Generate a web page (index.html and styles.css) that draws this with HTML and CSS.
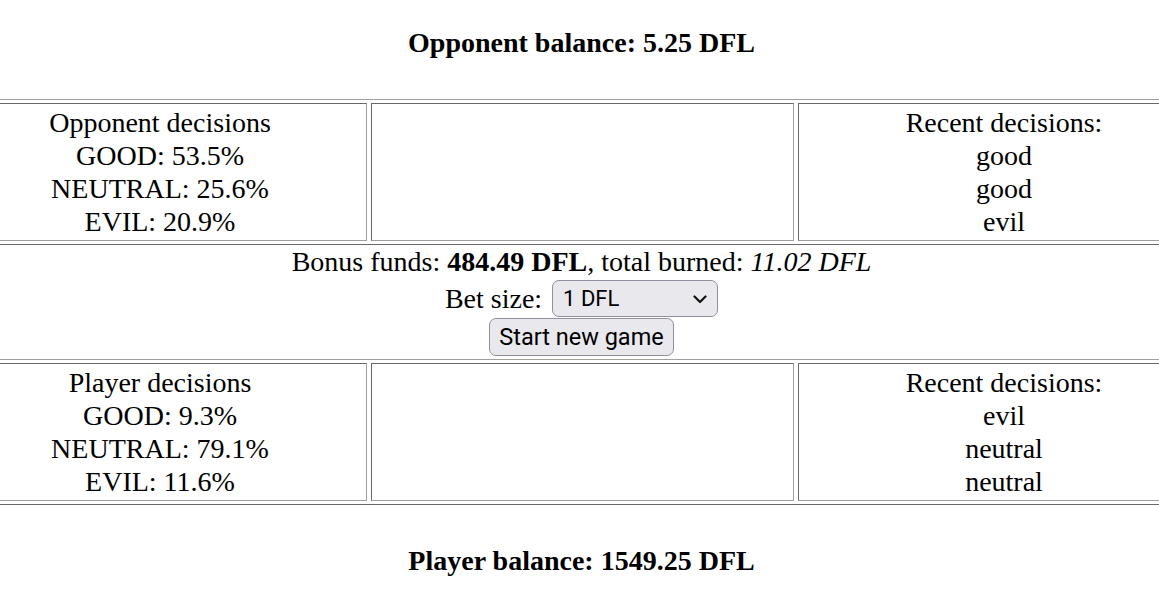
FILE: index.html
```
<!DOCTYPE html>
<html lang="en">
  <head>
    <meta charset="utf-8" />
    <meta name="viewport" content="width=device-width, initial-scale=1" />
    <title>Good, neutral, evil</title>
    <link rel="stylesheet" href="styles.css">
  </head>
  <body>
    <div class="page">
      <h4 class="balance">Opponent balance: 5.25 DFL</h4>
      <table class="side">
        <tr>
          <td class="stats">Opponent decisions<br>GOOD: 53.5%<br>NEUTRAL: 25.6%<br>EVIL: 20.9%</td>
          <td class="field"></td>
          <td class="recent">Recent decisions:<br>good<br>good<br>evil</td>
        </tr>
      </table>
      <div class="controls">
        <div class="funds">Bonus funds: <b>484.49 DFL</b>, total burned: <i>11.02 DFL</i></div>
        <div class="bet">
          <label for="bet">Bet size:</label>
          <span class="picker">
            <select id="bet">
              <option>1 DFL</option>
              <option>5 DFL</option>
              <option>10 DFL</option>
              <option>50 DFL</option>
            </select>
            <svg width="14" height="9" viewBox="0 0 14 9"><path d="M1.5 1.5 L7 7 L12.5 1.5" fill="none" stroke="#111" stroke-width="2.2" stroke-linecap="round" stroke-linejoin="round"/></svg>
          </span>
        </div>
        <div class="start"><button id="start">Start new game</button></div>
      </div>
      <table class="side">
        <tr>
          <td class="stats">Player decisions<br>GOOD: 9.3%<br>NEUTRAL: 79.1%<br>EVIL: 11.6%</td>
          <td class="field"></td>
          <td class="recent">Recent decisions:<br>evil<br>neutral<br>neutral</td>
        </tr>
      </table>
      <h4 class="balance balance-bottom">Player balance: 1549.25 DFL</h4>
    </div>
  </body>
</html>
```

FILE: styles.css
```
html, body {
  overflow: hidden;
}
body {
  margin: 0;
  background: #fff;
  color: #000;
  font-family: "Liberation Serif", "Times New Roman", serif;
  font-size: 28px;
  line-height: 33px;
}
.page {
  width: 1267px;
  margin-left: -52px;
  text-align: center;
}
.balance {
  margin: 26px 0 40px;
  font-size: 28px;
  font-weight: bold;
}
.balance-bottom {
  margin-top: 39px;
}

/* decisions tables */
.side {
  width: 1267px;
  table-layout: fixed;
  border-collapse: separate;
  border-spacing: 4px 3px;
  border: 1px solid;
  border-color: #a0a0a0 #696969 #696969 #a0a0a0;
}
.side td {
  box-sizing: border-box;
  padding: 2px;
  border: 1px solid;
  border-color: #696969 #a0a0a0 #a0a0a0 #696969;
  text-align: center;
  vertical-align: middle;
}
.side .stats {
  width: 414px;
}
.side .field {
  width: 423px;
}
.side .recent {
  width: 412px;
}

/* middle controls */
.funds {
  height: 33px;
}
.bet {
  display: flex;
  justify-content: center;
  align-items: center;
  gap: 10px;
  height: 37px;
  padding: 2px 0 1px;
}
.picker {
  position: relative;
  display: block;
  height: 37px;
}
.picker select {
  appearance: none;
  -webkit-appearance: none;
  box-sizing: border-box;
  width: 166px;
  height: 37px;
  margin: 0;
  padding: 0 0 0 10px;
  border: 1px solid #8f8f9d;
  border-radius: 7px;
  background: #e9e9ed;
  color: #000;
  font-family: Roboto, "Liberation Sans", sans-serif;
  font-size: 22px;
}
.picker svg {
  position: absolute;
  right: 11px;
  top: 15px;
  pointer-events: none;
}
.start {
  display: flex;
  justify-content: center;
  align-items: flex-start;
  height: 41px;
}
.start button {
  box-sizing: border-box;
  height: 38px;
  margin: 0;
  padding: 0 9px;
  border: 1px solid #8f8f9d;
  border-radius: 7px;
  background: #e9e9ed;
  color: #000;
  font-family: Roboto, "Liberation Sans", sans-serif;
  font-size: 23.5px;
  line-height: 36px;
}
```
